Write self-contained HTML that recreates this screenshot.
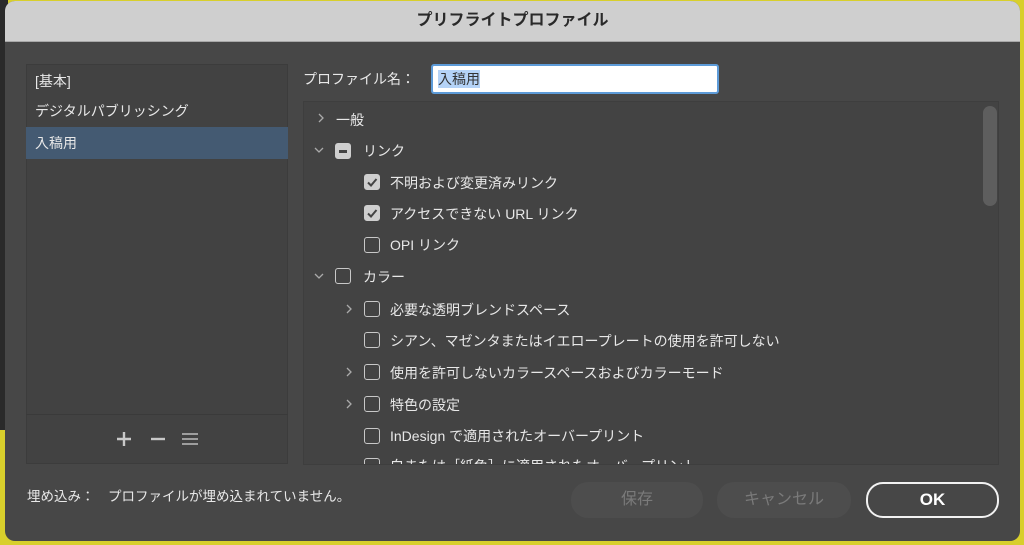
<!DOCTYPE html>
<html><head><meta charset="utf-8"><style>
*{margin:0;padding:0;box-sizing:border-box}
body{width:1024px;height:545px;overflow:hidden;background:#d8cf2c;position:relative;font-family:"Liberation Sans","Noto Sans CJK JP",sans-serif;font-size:14px;color:#e8e8e8}
.abs{position:absolute}
#left{left:0;top:0;width:8px;height:430px;background:#2a2a2a}
#dlg{left:5px;top:1px;width:1015px;height:540px;background:#474747;border-radius:10px;overflow:hidden}
#title{left:0;top:0;width:1015px;height:41px;background:#cfcfcf;border-bottom:1px solid #a8a8a8;text-align:center;line-height:40px;color:#2a2a2a;font-weight:bold;font-size:16px}
.t{position:absolute;white-space:nowrap;line-height:18px}
.cb{position:absolute;width:16px;height:16px;border:1.5px solid #c8c8c8;border-radius:3px}
.cbf{background:#cfcfcf;border-color:#cfcfcf}
.ch{position:absolute}
</style></head><body>
<div class="abs" id="left"></div>
<div class="abs" id="dlg">
<div class="abs" id="title">プリフライトプロファイル</div>
<div class="abs" style="left:21px;top:63px;width:262px;height:400px;background:#424242;border:1px solid #3c3c3c"></div>
<div class="abs" style="left:21px;top:413px;width:262px;height:1px;background:#3a3a3a"></div>
<div class="abs" style="left:21px;top:126px;width:262px;height:32px;background:#445a72"></div>
<div class="t" style="left:30px;top:71px">[基本]</div>
<div class="t" style="left:30px;top:101px">デジタルパブリッシング</div>
<div class="t" style="left:30px;top:133px">入稿用</div>
<svg class="abs" style="left:110px;top:429px" width="95" height="18">
<path d="M2 9h14M9 2v14" stroke="#c8c8c8" stroke-width="2.4"/>
<path d="M36 9h14" stroke="#c8c8c8" stroke-width="2.4"/>
<path d="M67 4h16M67 9h16M67 14h16" stroke="#bcbcbc" stroke-width="1.4"/>
</svg>
<div class="t" style="left:298px;top:69px">プロファイル名：</div>
<div class="abs" style="left:426px;top:63px;width:288px;height:30px;background:#fff;border:2px solid #5d9bd8;border-radius:3px"></div>
<div class="t" style="left:433px;top:69px;background:#b5d3f7;color:#333">入稿用</div>
<div class="abs" style="left:298px;top:100px;width:696px;height:364px;background:#434343;border:1px solid #3e3e3e"></div>
<div class="abs" style="left:978px;top:105px;width:14px;height:100px;background:#5e5e5e;border-radius:7px"></div>
<svg class="ch" style="left:310px;top:110px" width="12" height="14"><path d="M4 3l4 4-4 4" stroke="#aaa" stroke-width="1.3" fill="none"/></svg><div class="t" style="left:331px;top:110px">一般</div>
<svg class="ch" style="left:307px;top:143px" width="14" height="12"><path d="M3 4l4 4 4-4" stroke="#aaa" stroke-width="1.3" fill="none"/></svg><div class="cb cbf" style="left:330px;top:142px"></div><div class="abs" style="left:334px;top:149px;width:8px;height:2.5px;background:#444"></div><div class="t" style="left:358px;top:141px">リンク</div>
<div class="cb cbf" style="left:359px;top:173px"></div><svg class="abs" style="left:359px;top:173px" width="16" height="16"><path d="M4 8.5l3 3 5.5-6.5" stroke="#444" stroke-width="2" fill="none"/></svg><div class="t" style="left:385px;top:173px">不明および変更済みリンク</div>
<div class="cb cbf" style="left:359px;top:204px"></div><svg class="abs" style="left:359px;top:204px" width="16" height="16"><path d="M4 8.5l3 3 5.5-6.5" stroke="#444" stroke-width="2" fill="none"/></svg><div class="t" style="left:385px;top:204px">アクセスできない URL リンク</div>
<div class="cb" style="left:359px;top:236px"></div><div class="t" style="left:385px;top:235px">OPI リンク</div>
<svg class="ch" style="left:307px;top:269px" width="14" height="12"><path d="M3 4l4 4 4-4" stroke="#aaa" stroke-width="1.3" fill="none"/></svg><div class="cb" style="left:330px;top:267px"></div><div class="t" style="left:358px;top:267px">カラー</div>
<svg class="ch" style="left:338px;top:301px" width="12" height="14"><path d="M4 3l4 4-4 4" stroke="#aaa" stroke-width="1.3" fill="none"/></svg><div class="cb" style="left:359px;top:300px"></div><div class="t" style="left:385px;top:300px">必要な透明ブレンドスペース</div>
<div class="cb" style="left:359px;top:331px"></div><div class="t" style="left:385px;top:331px">シアン、マゼンタまたはイエロープレートの使用を許可しない</div>
<svg class="ch" style="left:338px;top:364px" width="12" height="14"><path d="M4 3l4 4-4 4" stroke="#aaa" stroke-width="1.3" fill="none"/></svg><div class="cb" style="left:359px;top:363px"></div><div class="t" style="left:385px;top:363px">使用を許可しないカラースペースおよびカラーモード</div>
<svg class="ch" style="left:338px;top:396px" width="12" height="14"><path d="M4 3l4 4-4 4" stroke="#aaa" stroke-width="1.3" fill="none"/></svg><div class="cb" style="left:359px;top:395px"></div><div class="t" style="left:385px;top:395px">特色の設定</div>
<div class="cb" style="left:359px;top:427px"></div><div class="t" style="left:385px;top:426px">InDesign で適用されたオーバープリント</div>
<div class="abs" style="left:299px;top:454px;width:680px;height:9px;overflow:hidden"><div class="cb" style="left:60px;top:3px"></div><div class="t" style="left:86px;top:2px">白または［紙色］に適用されたオーバープリント</div></div>
<div class="t" style="left:22px;top:487px;font-size:13.5px">埋め込み：　プロファイルが埋め込まれていません。</div>
<div class="abs" style="left:566px;top:481px;width:132px;height:36px;background:#4d4d4d;border-radius:17px;color:#7a7a7a;text-align:center;line-height:36px;font-size:16px">保存</div>
<div class="abs" style="left:712px;top:481px;width:134px;height:36px;background:#4d4d4d;border-radius:17px;color:#7a7a7a;text-align:center;line-height:36px;font-size:16px">キャンセル</div>
<div class="abs" style="left:861px;top:481px;width:133px;height:36px;border:2px solid #f2f2f2;border-radius:17px;color:#fff;text-align:center;line-height:32px;font-size:17px;font-weight:bold">OK</div>
</div>
</body></html>
